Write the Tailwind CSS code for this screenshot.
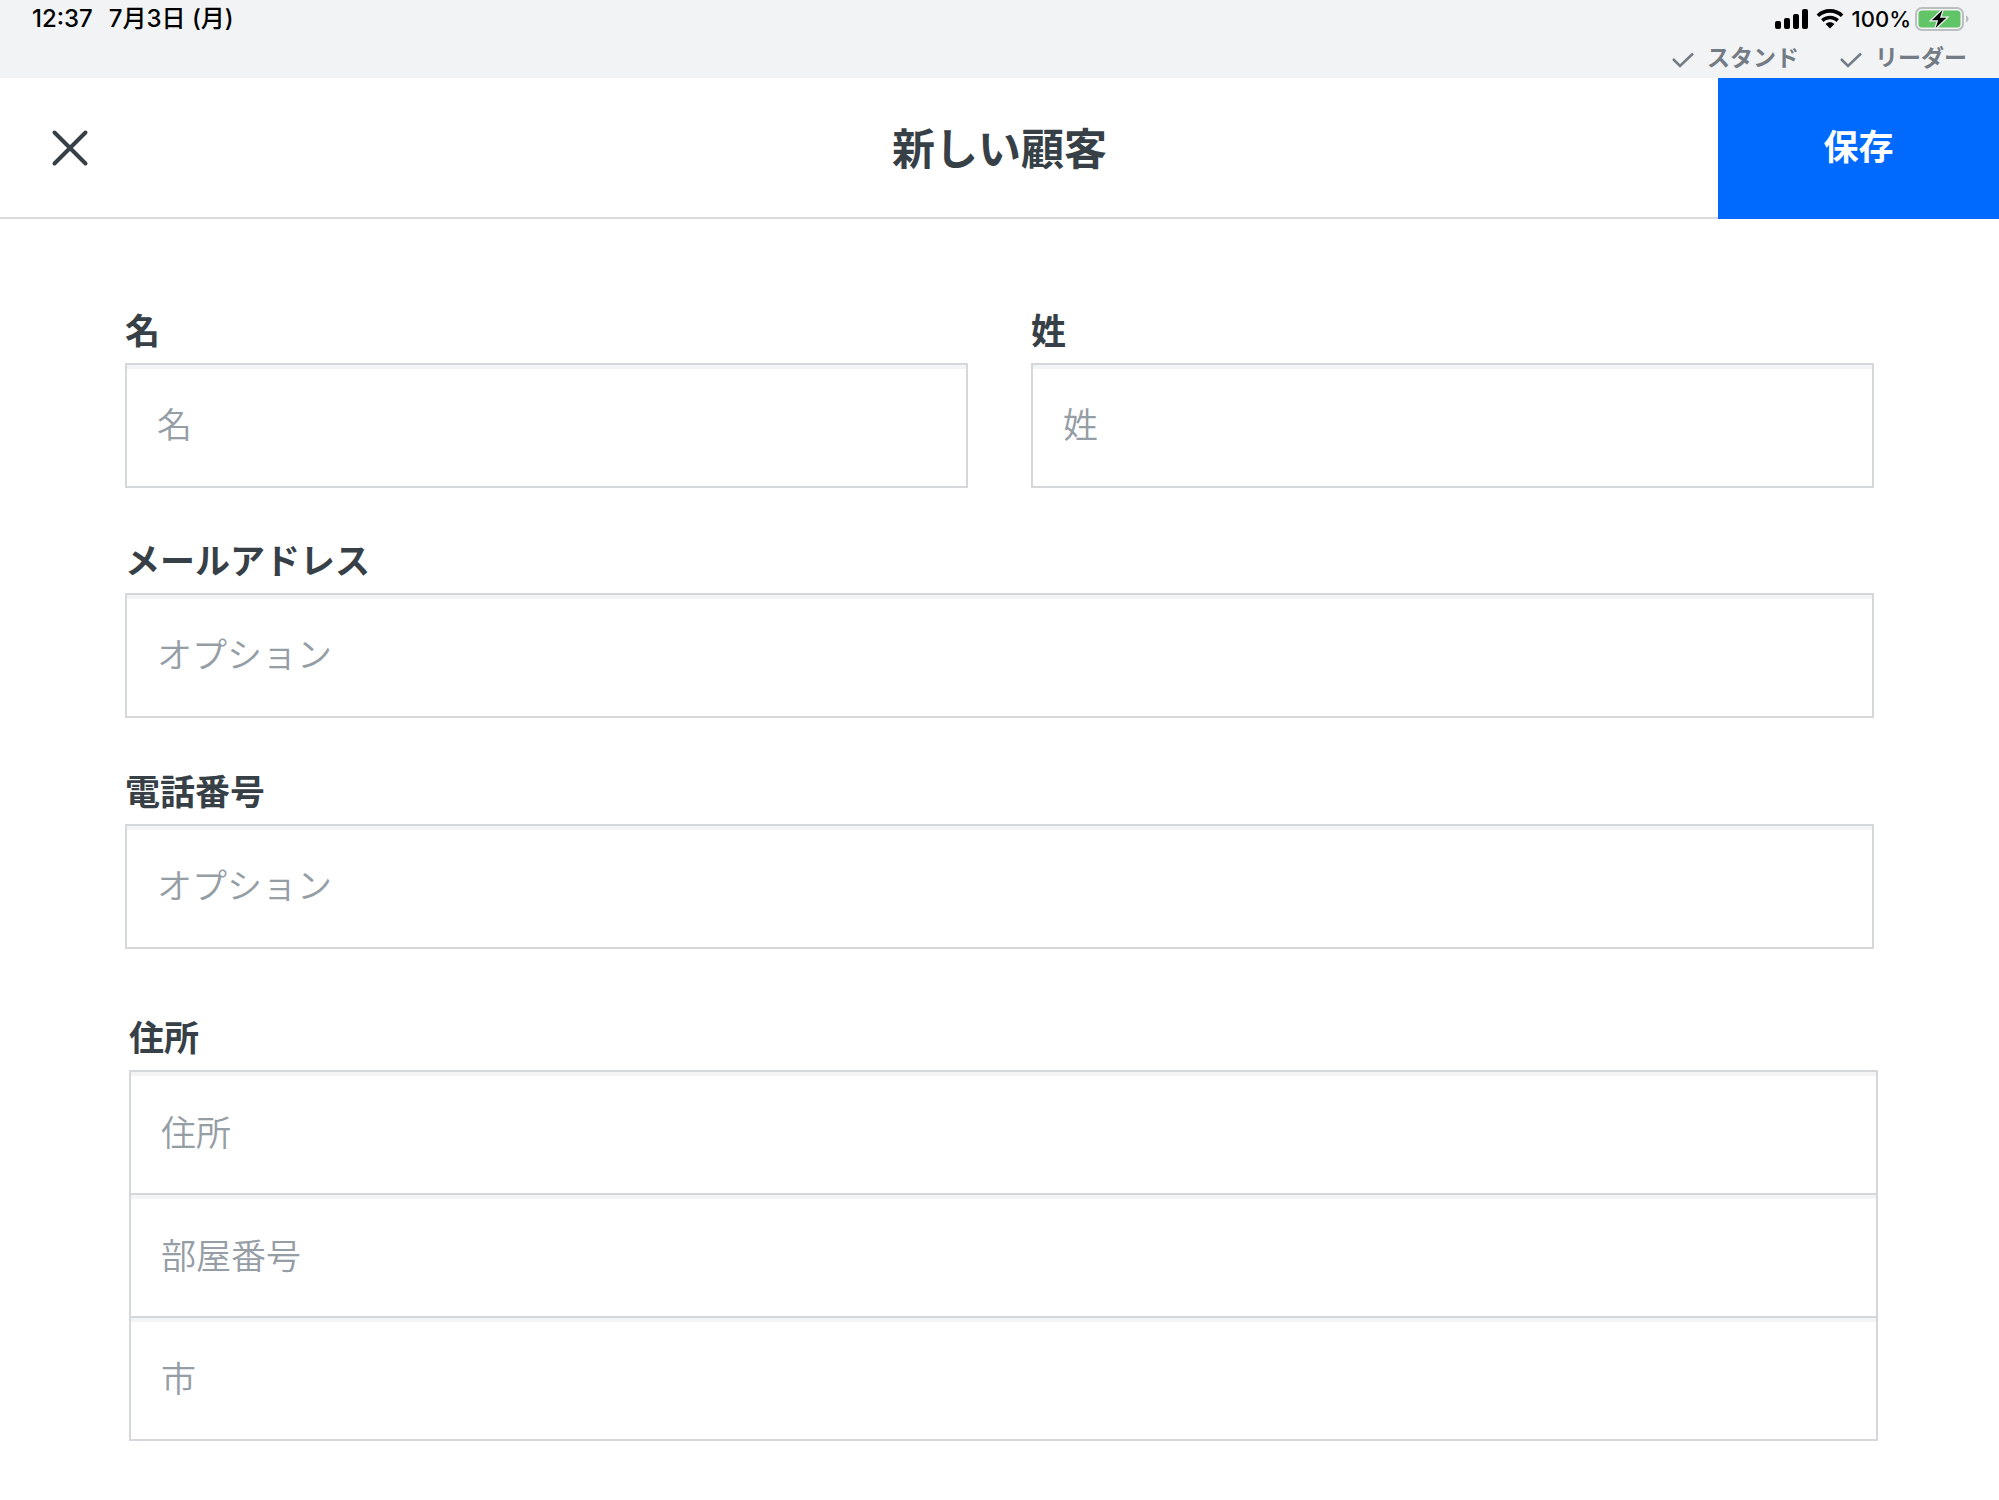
<!DOCTYPE html>
<html lang="ja">
<head>
    <meta charset="UTF-8">
    <meta name="viewport" content="width=device-width, initial-scale=1.0">
    <script src="https://cdn.jsdelivr.net/npm/@tailwindcss/browser@4"></script>
    <title>新しい顧客</title>
</head>
<body class="min-h-screen bg-white text-[#373f47] font-['Inter','Noto_Sans_CJK_JP',sans-serif]">

    <!-- Status bar -->
    <div class="bg-[#f2f3f5] h-[78px] pl-8 pr-[30px] flex justify-between">
        <div class="flex h-[38px] items-center gap-4 text-[24px] font-medium text-black">
            <span>12:37</span>
            <span>7月3日 (月)</span>
        </div>
        <div class="flex flex-col items-end">
            <div class="flex h-[38px] items-center text-[22px] font-medium text-black">
                <svg class="w-[33px] h-5 mr-2" viewBox="0 0 33 20" aria-hidden="true">
                    <rect x="0" y="12" width="6" height="8" rx="2"/>
                    <rect x="9" y="9" width="6" height="11" rx="2"/>
                    <rect x="18" y="5" width="6" height="15" rx="2"/>
                    <rect x="27" y="0" width="6" height="20" rx="2"/>
                </svg>
                <svg class="w-7 h-5 mr-2" viewBox="0 0 28 20" aria-hidden="true">
                    <path d="M14 0C8.700 0 4 2 .6 5.400l2.500 2.700C6 5.300 9.800 3.700 14 3.700s8 1.600 10.900 4.400l2.500-2.700C24 2 19.300 0 14 0z"/>
                    <path d="M14 6.700c-3.500 0-6.600 1.300-8.900 3.600l2.500 2.600c1.700-1.600 3.900-2.600 6.400-2.600s4.700 1 6.400 2.600l2.500-2.600C20.600 8 17.500 6.700 14 6.700z"/>
                    <path d="M14 13.200c-1.700 0-3.200.6-4.400 1.700L14 19.500l4.400-4.600c-1.200-1.100-2.700-1.700-4.400-1.700z"/>
                </svg>
                <span>100%</span>
                <svg class="w-[54px] h-6 ml-1" viewBox="0 0 54 24" aria-hidden="true">
                    <rect x="1" y="1" width="47" height="22" rx="6" fill="none" stroke="#bcbfc1" stroke-width="2"/>
                    <rect x="3.500" y="3.500" width="42" height="17" rx="3.500" fill="#61c466"/>
                    <path d="M51 8.500v7c1.500-.6 2.500-1.900 2.500-3.500s-1-2.900-2.500-3.500z" fill="#bcbfc1"/>
                    <path d="M27.500 3L16.800 13.300h6.400L20.600 21l10.800-10.300H25z" fill="#000" stroke="#f2f3f5" stroke-width="2.500" paint-order="stroke"/>
                </svg>
            </div>
            <div class="flex h-10 items-center gap-10 pr-[2px] text-[23px] font-bold text-[#737c85]">
                <span class="flex items-center gap-3">
                    <svg class="w-6 h-4 mt-1" viewBox="0 0 24 16" fill="none" stroke="currentColor" stroke-width="2.500" aria-hidden="true"><path d="M2 7l7 7L22 1.500"/></svg>
                    スタンド
                </span>
                <span class="flex items-center gap-3">
                    <svg class="w-6 h-4 mt-1" viewBox="0 0 24 16" fill="none" stroke="currentColor" stroke-width="2.500" aria-hidden="true"><path d="M2 7l7 7L22 1.500"/></svg>
                    リーダー
                </span>
            </div>
        </div>
    </div>

    <form>
        <!-- Header -->
        <header class="grid grid-cols-[281px_1fr_281px] h-[141px]">
            <div class="flex items-center pl-[50px] border-b-2 border-[#d8dbdd]">
                <button type="button" aria-label="閉じる">
                    <svg class="w-10 h-10" viewBox="0 0 40 40" fill="none" stroke="currentColor" stroke-width="4" stroke-linecap="round"><path d="M4.500 4.500l31 31M35.500 4.500l-31 31"/></svg>
                </button>
            </div>
            <h1 class="flex items-center justify-center pt-1 border-b-2 border-[#d8dbdd] text-[43px] font-bold">新しい顧客</h1>
            <button type="submit" class="pb-[2px] bg-[#006aff] text-white text-[35px] font-bold">保存</button>
        </header>

        <!-- Fields -->
        <div class="px-[125px] pt-[92px]">
            <div class="grid grid-cols-2 gap-[63px]">
                <div>
                    <label for="first" class="block mb-3 text-[35px] leading-10 font-bold">名</label>
                    <input id="first" type="text" placeholder="名" class="block w-full h-[125px] px-[30px] pb-[2px] border-2 border-[#d5d8da] shadow-[inset_0_4px_0_#f3f4f6] text-[35px] font-[350] placeholder:text-[#959da5] focus:outline-none">
                </div>
                <div>
                    <label for="last" class="block mb-3 text-[35px] leading-10 font-bold">姓</label>
                    <input id="last" type="text" placeholder="姓" class="block w-full h-[125px] px-[30px] pb-[2px] border-2 border-[#d5d8da] shadow-[inset_0_4px_0_#f3f4f6] text-[35px] font-[350] placeholder:text-[#959da5] focus:outline-none">
                </div>
            </div>

            <div class="mt-[53px]">
                <label for="email" class="block mb-3 text-[35px] leading-10 font-bold">メールアドレス</label>
                <input id="email" type="email" placeholder="オプション" class="block w-full h-[125px] px-[30px] pb-[2px] border-2 border-[#d5d8da] shadow-[inset_0_4px_0_#f3f4f6] text-[35px] font-[350] placeholder:text-[#959da5] focus:outline-none">
            </div>

            <div class="mt-[54px]">
                <label for="phone" class="block mb-3 text-[35px] leading-10 font-bold">電話番号</label>
                <input id="phone" type="tel" placeholder="オプション" class="block w-full h-[125px] px-[30px] pb-[2px] border-2 border-[#d5d8da] shadow-[inset_0_4px_0_#f3f4f6] text-[35px] font-[350] placeholder:text-[#959da5] focus:outline-none">
            </div>
        </div>

        <!-- Address -->
        <div class="pl-[129px] pr-[121px] pt-[69px] pb-14">
            <label for="street" class="block mb-3 text-[35px] leading-10 font-bold">住所</label>
            <input id="street" type="text" placeholder="住所" class="block w-full h-[125px] px-[30px] border-2 border-[#d5d8da] shadow-[inset_0_4px_0_#f3f4f6] text-[35px] font-[350] placeholder:text-[#959da5] focus:outline-none">
            <input id="room" type="text" placeholder="部屋番号" aria-label="部屋番号" class="block w-full h-[125px] -mt-[2px] px-[30px] border-2 border-[#d5d8da] shadow-[inset_0_4px_0_#f3f4f6] text-[35px] font-[350] placeholder:text-[#959da5] focus:outline-none">
            <input id="city" type="text" placeholder="市" aria-label="市" class="block w-full h-[125px] -mt-[2px] px-[30px] border-2 border-[#d5d8da] shadow-[inset_0_4px_0_#f3f4f6] text-[35px] font-[350] placeholder:text-[#959da5] focus:outline-none">
        </div>
    </form>

</body>
</html>
